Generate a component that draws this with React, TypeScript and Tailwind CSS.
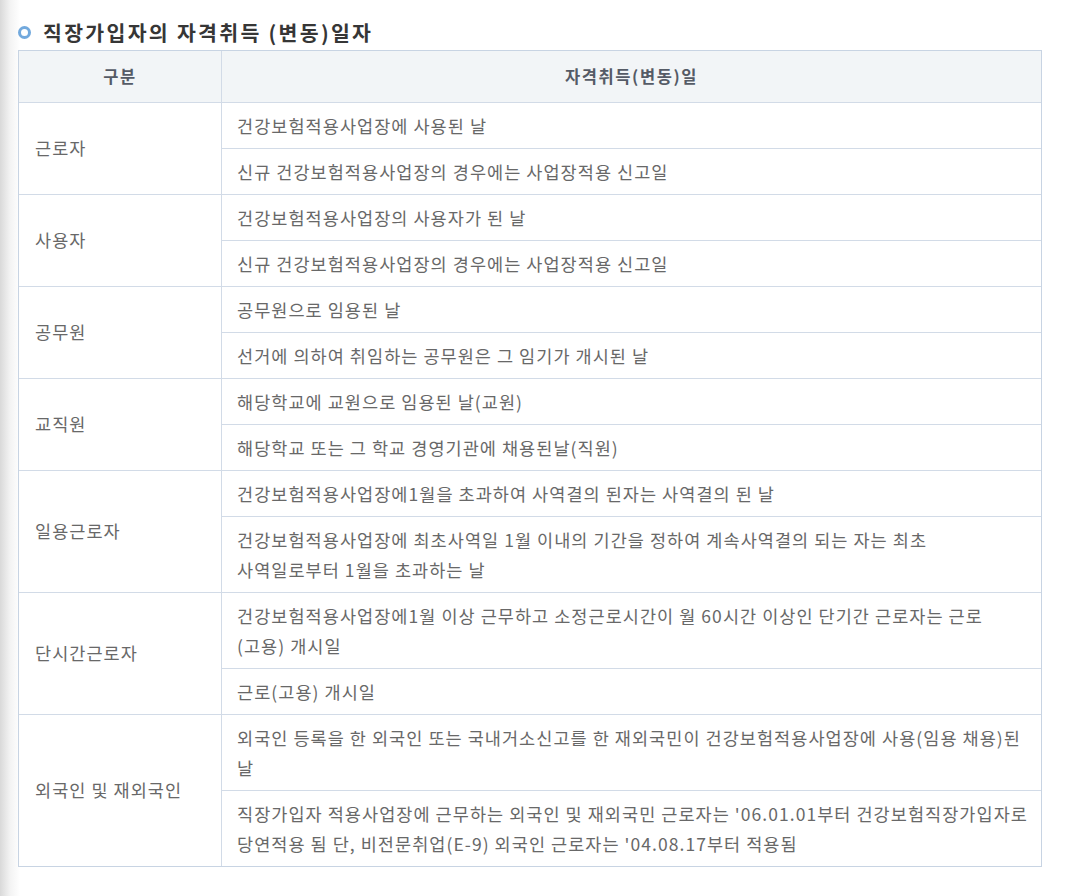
import React from "react";

type Group = { label: string; items: string[] };

const groups: Group[] = [
  { label: "근로자", items: ["건강보험적용사업장에 사용된 날", "신규 건강보험적용사업장의 경우에는 사업장적용 신고일"] },
  { label: "사용자", items: ["건강보험적용사업장의 사용자가 된 날", "신규 건강보험적용사업장의 경우에는 사업장적용 신고일"] },
  { label: "공무원", items: ["공무원으로 임용된 날", "선거에 의하여 취임하는 공무원은 그 임기가 개시된 날"] },
  { label: "교직원", items: ["해당학교에 교원으로 임용된 날(교원)", "해당학교 또는 그 학교 경영기관에 채용된날(직원)"] },
  {
    label: "일용근로자",
    items: [
      "건강보험적용사업장에1월을 초과하여 사역결의 된자는 사역결의 된 날",
      "건강보험적용사업장에 최초사역일 1월 이내의 기간을 정하여 계속사역결의 되는 자는 최초\n사역일로부터 1월을 초과하는 날",
    ],
  },
  {
    label: "단시간근로자",
    items: [
      "건강보험적용사업장에1월 이상 근무하고 소정근로시간이 월 60시간 이상인 단기간 근로자는 근로\n(고용) 개시일",
      "근로(고용) 개시일",
    ],
  },
  {
    label: "외국인 및 재외국인",
    items: [
      "외국인 등록을 한 외국인 또는 국내거소신고를 한 재외국민이 건강보험적용사업장에 사용(임용 채용)된\n날",
      "직장가입자 적용사업장에 근무하는 외국인 및 재외국민 근로자는 '06.01.01부터 건강보험직장가입자로\n당연적용 됨 단, 비전문취업(E-9) 외국인 근로자는 '04.08.17부터 적용됨",
    ],
  },
];

export default function App() {
  return (
    <div
      className="w-[1066px] h-[896px] bg-[linear-gradient(to_right,#d9d9d9,#f3f3f3_10px,#ffffff_20px)] pt-[18px]"
      style={{ fontFamily: '"Noto Sans CJK KR", "Noto Sans", sans-serif' }}
    >
      <div className="flex items-center h-[28px] pl-[18px]">
        <span className="block w-[13px] h-[13px] rounded-full border-[3px] border-[#72a9dd]" />
        <span className="ml-[12px] text-[20.5px] font-bold text-[#363636] leading-[28px] tracking-[2.3px]">
          직장가입자의 자격취득 (변동)일자
        </span>
      </div>
      <div className="mt-[4px] ml-[18px] w-[1024px] border border-[#c8d4e3] text-[17.5px] text-[#686868] tracking-[1.05px]">
        <div className="flex h-[52px] bg-[#f2f5f7] border-b border-[#d2dbe7] font-semibold text-[#555b66] text-[16.5px] tracking-[1.6px]">
          <div className="w-[203px] flex items-center justify-center border-r border-[#d2dbe7]">구분</div>
          <div className="flex-1 flex items-center justify-center">자격취득(변동)일</div>
        </div>
        {groups.map((g, gi) => (
          <div
            key={g.label}
            className={"flex " + (gi < groups.length - 1 ? "border-b border-[#d2dbe7]" : "")}
          >
            <div className="w-[203px] flex items-center pl-[16px] border-r border-[#d2dbe7]">{g.label}</div>
            <div className="flex-1 flex flex-col">
              {g.items.map((t, i) => (
                <div
                  key={i}
                  className={
                    "pl-[15px] pr-[2px] pt-[8px] pb-[7px] leading-[30px] break-keep whitespace-pre-line " +
                    (i < g.items.length - 1 ? "border-b border-[#d2dbe7]" : "")
                  }
                >
                  {t}
                </div>
              ))}
            </div>
          </div>
        ))}
      </div>
    </div>
  );
}
